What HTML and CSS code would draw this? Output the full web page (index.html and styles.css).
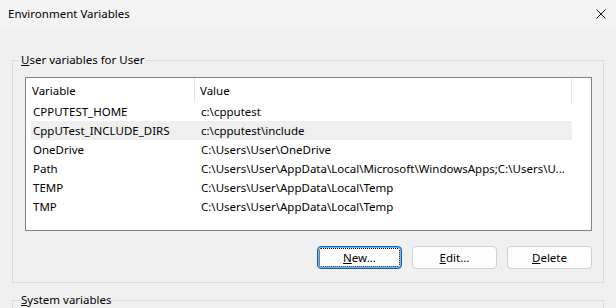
FILE: index.html
```html
<!DOCTYPE html>
<html>
<head>
<meta charset="utf-8">
<link rel="stylesheet" href="styles.css">
</head>
<body>
<div class="titlebar">
  <span class="title">Environment Variables</span>
  <svg class="close" width="10" height="10" viewBox="0 0 10 10"><path d="M0.5 0.5 L9.5 9.5 M9.5 0.5 L0.5 9.5" stroke="#1a1a1a" stroke-width="1" fill="none"/></svg>
</div>
<div class="content">
  <fieldset class="group">
    <legend><u>U</u>ser variables for User</legend>
    <div class="list">
      <div class="header">
        <div class="hcell c1">Variable</div>
        <div class="hcell c2">Value</div>
        <div class="hcell c3"></div>
      </div>
      <div class="row"><div class="cell c1">CPPUTEST_HOME</div><div class="cell c2">c:\cpputest</div></div>
      <div class="row sel"><div class="cell c1">CppUTest_INCLUDE_DIRS</div><div class="cell c2">c:\cpputest\include</div></div>
      <div class="row"><div class="cell c1">OneDrive</div><div class="cell c2">C:\Users\User\OneDrive</div></div>
      <div class="row"><div class="cell c1">Path</div><div class="cell c2">C:\Users\User\AppData\Local\Microsoft\WindowsApps;C:\Users\U...</div></div>
      <div class="row"><div class="cell c1">TEMP</div><div class="cell c2">C:\Users\User\AppData\Local\Temp</div></div>
      <div class="row"><div class="cell c1">TMP</div><div class="cell c2">C:\Users\User\AppData\Local\Temp</div></div>
    </div>
    <div class="buttons">
      <button class="btn default"><u>N</u>ew...</button>
      <button class="btn"><u>E</u>dit...</button>
      <button class="btn"><u>D</u>elete</button>
    </div>
  </fieldset>
  <fieldset class="group second">
    <legend><u>S</u>ystem variables</legend>
  </fieldset>
</div>
</body>
</html>
```
FILE: styles.css
```css
html, body {
  margin: 0;
  padding: 0;
  background: #f0f0f0;
  font-family: "Noto Sans", "Open Sans", sans-serif;
  font-size: 11.5px;
  color: #000;
  overflow: hidden;
  width: 616px;
  height: 308px;
}
.titlebar {
  height: 28px;
  background: #f3f3f3;
  display: flex;
  align-items: center;
  justify-content: space-between;
  padding: 0 10px 0 8px;
}
.title {
  line-height: 16px;
}
.close {
  display: block;
}
.content {
  padding-top: 24px;
  height: 256px;
  overflow: hidden;
}
.group {
  margin: 0 12px;
  border: 1px solid #dcdcdc;
  padding: 9px 11px 13px 12px;
  min-width: 0;
}
.group legend {
  padding: 0 1px;
  margin-left: -5px;
  line-height: 16px;
}
.second {
  margin-top: 9px;
  height: 20px;
}
.list {
  border: 1px solid #838383;
  background: #fff;
  height: 152px;
}
.header {
  display: flex;
  height: 24px;
}
.hcell {
  line-height: 25px;
  border-right: 1px solid #e5e5e5;
  flex-shrink: 0;
}
.header .c1 {
  width: 162px;
  padding-left: 6px;
}
.header .c2 {
  width: 371px;
  padding-left: 5px;
}
.header .c3 {
  border-right: none;
  flex: 1;
}
.row {
  display: flex;
  height: 19px;
  margin-left: 5px;
  width: 541px;
}
.row.sel {
  background: #efefef;
}
.cell {
  line-height: 20px;
  white-space: nowrap;
}
.row .c1 {
  width: 162px;
  flex-shrink: 0;
  padding-left: 2px;
}
.row .c2 {
  flex: 1;
  min-width: 0;
  overflow: hidden;
  padding-left: 6px;
}
.buttons {
  display: flex;
  justify-content: flex-end;
  gap: 10px;
  margin-top: 15px;
}
.btn {
  width: 85px;
  height: 23px;
  font-family: inherit;
  font-size: 11.5px;
  background: #fdfdfd;
  border: 1px solid #d0d0d0;
  border-radius: 4px;
  padding: 0;
  color: #000;
}
.btn.default {
  border-color: #0067c0;
  box-shadow: inset 0 0 0 0.5px #0067c0;
  outline: 1px dotted #000;
  outline-offset: -3px;
}
```
